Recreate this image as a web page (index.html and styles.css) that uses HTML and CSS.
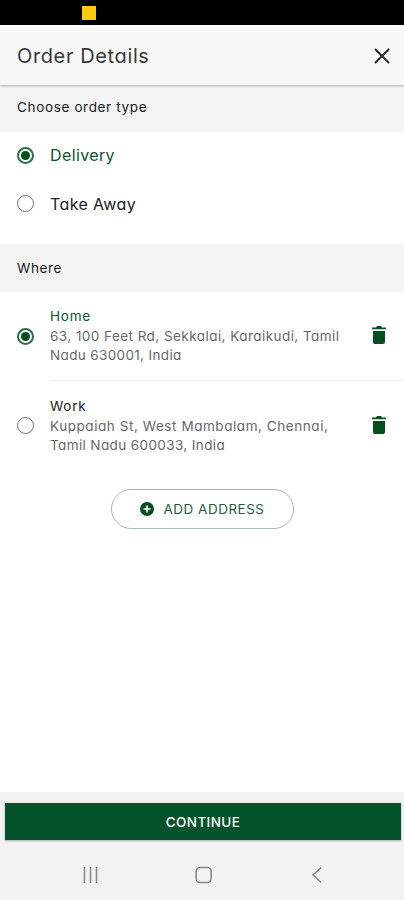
FILE: index.html
```
<!DOCTYPE html>
<html lang="en">
<head>
<meta charset="utf-8">
<meta name="viewport" content="width=device-width, initial-scale=1">
<title>Order Details</title>
<link rel="stylesheet" href="styles.css">
</head>
<body>
<div class="status"><span class="status-mark"></span></div>
<header class="header">
  <h1 class="title">Order Details</h1>
  <svg class="close" viewBox="0 0 18 18"><path d="M2 2 16 16M16 2 2 16"/></svg>
</header>
<main class="main">
  <h2 class="section section-type">Choose order type</h2>
  <div class="types">
    <label class="type selected"><span class="radio"></span><span>Delivery</span></label>
    <label class="type"><span class="radio"></span><span>Take Away</span></label>
  </div>
  <h2 class="section section-where">Where</h2>
  <div class="address selected">
    <span class="radio"></span>
    <div class="address-body">
      <div class="name">Home</div>
      <div class="line t-a1">63, 100 Feet Rd, Sekkalai, Karaikudi, Tamil</div>
      <div class="line t-a2">Nadu 630001, India</div>
    </div>
    <svg class="trash" viewBox="0 0 14 18"><path d="M0 1.5h4L5 0h4l1 1.5h4v1.7H0zM1 5h12v11.2Q13 18 11.2 18H2.8Q1 18 1 16.2z"/></svg>
  </div>
  <div class="address">
    <span class="radio"></span>
    <div class="address-body">
      <div class="name">Work</div>
      <div class="line t-b1">Kuppaiah St, West Mambalam, Chennai,</div>
      <div class="line t-b2">Tamil Nadu 600033, India</div>
    </div>
    <svg class="trash" viewBox="0 0 14 18"><path d="M0 1.5h4L5 0h4l1 1.5h4v1.7H0zM1 5h12v11.2Q13 18 11.2 18H2.8Q1 18 1 16.2z"/></svg>
  </div>
  <button class="add">
    <svg class="plus" viewBox="0 0 14 14"><circle cx="7" cy="7" r="7"/><path d="M7 3.5v7M3.5 7h7"/></svg>
    <span>ADD ADDRESS</span>
  </button>
</main>
<footer class="footer">
  <button class="continue">CONTINUE</button>
  <nav class="nav">
    <svg class="nav-icon" viewBox="0 0 18 18"><path d="M2.5 1v16M8.5 1v16M14.5 1v16"/></svg>
    <svg class="nav-icon" viewBox="0 0 18 18"><rect x="1.2" y="1.5" width="15" height="15" rx="4"/></svg>
    <svg class="nav-icon" viewBox="0 0 18 18"><path d="M13.3 1.5 5 9l8.3 7.5"/></svg>
  </nav>
</footer>
</body>
</html>
```
FILE: styles.css
```
* { box-sizing: border-box; }
body {
  margin: 0;
  height: 900px;
  display: flex;
  flex-direction: column;
  overflow: hidden;
  background: #fff;
  color: #202020;
  font-family: Inter, "Liberation Sans", sans-serif;
  font-feature-settings: "cv11";
}
h1, h2 { margin: 0; font-weight: 400; }
button { font: inherit; font-feature-settings: inherit; padding: 0; }
svg { display: block; flex: none; }
.status { height: 25px; background: #000; padding: 6px 0 0 82px; }
.status-mark { display: block; width: 14px; height: 14px; background: #fdcb0a; }
.header {
  position: relative;
  height: 60px;
  display: flex;
  align-items: center;
  justify-content: space-between;
  padding: 0 13px 0 17px;
  background: #f8f8f8;
  border-top: 1px solid #fff;
  box-shadow: 0 1px 2px rgba(0, 0, 0, .3);
}
.title { font-size: 20px; color: #383838; letter-spacing: .62px; }
.close { width: 18px; height: 18px; fill: none; stroke: #222; stroke-width: 1.8; }
.section { display: flex; align-items: center; padding-left: 17px; background: #f3f3f3; font-size: 13.5px; letter-spacing: .65px; }
.section-type { height: 47px; padding-bottom: 3px; }
.section-where { height: 48px; }
.types { height: 112px; }
.type { display: flex; align-items: center; gap: 16px; height: 48.5px; padding: 0 0 2px 17px; font-size: 16px; letter-spacing: .38px; }
.selected { color: #0a552d; }
.radio {
  flex: none;
  width: 17px;
  height: 17px;
  border: 1.5px solid #707070;
  border-radius: 50%;
  display: flex;
  align-items: center;
  justify-content: center;
}
.selected .radio { border: 2px solid #2b6c49; }
.selected .radio::after { content: ""; width: 9px; height: 9px; border-radius: 50%; background: #00501f; }
.address { display: flex; align-items: center; gap: 16px; height: 88px; padding: 0 18px 0 17px; }
.address + .address { height: 91px; }
.address-body { flex: 1; height: 100%; padding-top: 14px; white-space: nowrap; }
.address + .address .address-body { border-top: 1px solid #eee; margin-right: -48px; padding-top: 15px; }
.address + .address .trash { margin-left: 14px; }
.name { font-size: 13.5px; line-height: 20px; letter-spacing: .75px; }
.line { font-size: 13.5px; line-height: 19px; color: #686868; position: relative; top: 1px; }
.t-a1 { letter-spacing: .45px; }
.t-a2 { letter-spacing: .35px; }
.t-b1 { letter-spacing: .56px; }
.t-b2 { letter-spacing: .38px; }
.trash { width: 14px; height: 18px; fill: #00501f; margin-top: -3px; }
.address + .address .trash { margin: -2px 0 0 0; }
.add {
  display: flex;
  align-items: center;
  justify-content: center;
  gap: 9px;
  width: 183px;
  height: 40px;
  margin: 18px 0 0 111px;
  border: 1px solid #a3bcb1;
  border-radius: 20px;
  background: #fff;
  color: #285d43;
  font-size: 13.5px;
  letter-spacing: .5px;
}
.plus { width: 14px; height: 14px; fill: #00501f; }
.plus path { stroke: #fff; stroke-width: 1.6; }
.footer { height: 108px; margin-top: auto; padding: 11px 3px 0 5px; background: #f2f2f2; }
.continue {
  display: flex;
  align-items: center;
  justify-content: center;
  width: 100%;
  height: 37px;
  border: 0;
  background: #04532a;
  color: #fff;
  font-size: 13.5px;
  font-weight: 500;
  letter-spacing: .4px;
  box-shadow: 0 1px 2px rgba(0, 0, 0, .3);
}
.nav { display: flex; gap: 95px; padding: 26px 0 0 77px; }
.nav-icon { width: 18px; height: 18px; fill: none; stroke: #8a8a8a; stroke-width: 1.6; }
```
